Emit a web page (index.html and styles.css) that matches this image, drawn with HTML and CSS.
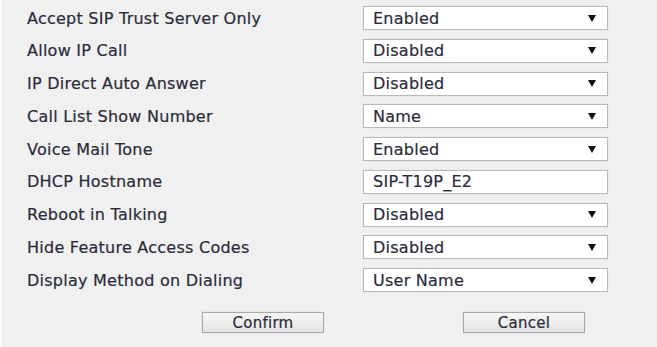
FILE: index.html
```
<!DOCTYPE html>
<html lang="en">
<head>
    <meta charset="UTF-8">
    <title>Features - General Information</title>
    <link rel="stylesheet" href="styles.css">
</head>
<body>
    <form class="settings">
        <div class="rows">
            <label class="label">Accept SIP Trust Server Only</label>
            <div class="field select"><span>Enabled</span><i class="arrow"></i></div>

            <label class="label">Allow IP Call</label>
            <div class="field select"><span>Disabled</span><i class="arrow"></i></div>

            <label class="label">IP Direct Auto Answer</label>
            <div class="field select"><span>Disabled</span><i class="arrow"></i></div>

            <label class="label">Call List Show Number</label>
            <div class="field select"><span>Name</span><i class="arrow"></i></div>

            <label class="label">Voice Mail Tone</label>
            <div class="field select"><span>Enabled</span><i class="arrow"></i></div>

            <label class="label">DHCP Hostname</label>
            <div class="field text"><span>SIP-T19P_E2</span></div>

            <label class="label">Reboot in Talking</label>
            <div class="field select"><span>Disabled</span><i class="arrow"></i></div>

            <label class="label">Hide Feature Access Codes</label>
            <div class="field select"><span>Disabled</span><i class="arrow"></i></div>

            <label class="label">Display Method on Dialing</label>
            <div class="field select"><span>User Name</span><i class="arrow"></i></div>
        </div>

        <div class="actions">
            <button type="button" class="btn">Confirm</button>
            <button type="button" class="btn">Cancel</button>
        </div>
    </form>
</body>
</html>
```
FILE: styles.css
```
* {
    margin: 0;
    padding: 0;
    box-sizing: border-box;
}

body {
    background: #f0f0f0;
    font-family: 'DejaVu Sans', Verdana, sans-serif;
    font-size: 16px;
    letter-spacing: 0.25px;
    color: #2b2b3a;
    -webkit-text-stroke: 0.2px #2b2b3a;
    width: 657px;
    height: 347px;
    border-left: 2px solid #fafafa;
}

.settings {
    padding: 6px 0 0 25px;
}

/* Rows */
.rows {
    display: grid;
    grid-template-columns: 336px 245px;
    grid-auto-rows: 24px;
    row-gap: 8.75px;
    align-items: center;
}

.label {
    line-height: 24px;
    padding-top: 1px;
}

.field {
    height: 24px;
    background: #fff;
    border: 1px solid #b9b9b9;
    box-shadow: 0 0 1px rgba(0, 0, 0, 0.15);
    display: flex;
    align-items: center;
    padding: 0 10px 0 9px;
}

.field span {
    flex: 1;
}

.arrow {
    width: 0;
    height: 0;
    border-left: 4.5px solid transparent;
    border-right: 4.5px solid transparent;
    border-top: 7px solid #111;
    margin-right: 1px;
}

/* Buttons */
.actions {
    display: flex;
    padding: 20px 0 0 175px;
    gap: 139px;
}

.btn {
    width: 122px;
    height: 21px;
    font-family: inherit;
    font-size: 15px;
    letter-spacing: 0.25px;
    line-height: 18px;
    color: #2b2b3a;
    -webkit-text-stroke: 0.2px #2b2b3a;
    background: linear-gradient(#f6f6f6, #e4e4e4);
    border: 1px solid #a8a8a8;
    box-shadow: 0 0 1px rgba(0, 0, 0, 0.2);
}
```
